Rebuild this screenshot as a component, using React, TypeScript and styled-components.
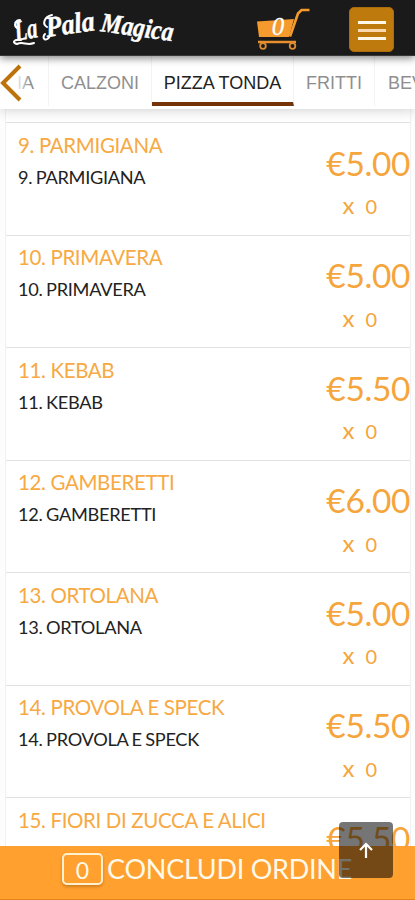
import React from "react";
import styled, { createGlobalStyle } from "styled-components";

const GlobalStyle = createGlobalStyle`
  * { box-sizing: border-box; }
  body { margin: 0; overflow: hidden; background: #fdfdfd; font-family: Lato, sans-serif; }
`;

const Screen = styled.div`
  position: relative;
  display: flex;
  flex-direction: column;
  width: 415px;
  height: 900px;
  overflow: hidden;
`;

const Header = styled.header`
  display: flex;
  flex: none;
  align-items: flex-start;
  height: 56px;
  background: #1a1a1a;
  border-bottom: 1px solid #393637;
  z-index: 3;
  box-shadow: 0 2px 8px rgba(0, 0, 0, 0.5);
`;

const Logo = styled.svg`
  width: 180px;
  height: 55px;
  flex: none;
  font-family: "Liberation Serif", serif;
  font-weight: 700;
  font-style: italic;
  fill: #fff;
`;

const CartIcon = styled.svg`
  width: 56px;
  height: 48px;
  margin: 4px 0 0 74px;
  flex: none;
`;

const MenuButton = styled.button`
  display: flex;
  flex-direction: column;
  align-items: center;
  gap: 5px;
  width: 45px;
  height: 45px;
  margin: 7px 0 0 39px;
  padding: 13px 0 0;
  border: 1px solid #ab6c0c;
  border-radius: 5px;
  background: #be7a0c;
`;

const MenuBar = styled.span<{ $soft?: boolean }>`
  width: 28px;
  height: 3px;
  background: ${(p) => (p.$soft ? "#fbd9b0" : "#fff8e8")};
`;

const Tabs = styled.nav`
  position: relative;
  display: flex;
  flex: none;
  height: 53px;
  background: #fff;
  z-index: 2;
  box-shadow: 0 1px 12px rgba(0, 0, 0, 0.2);
`;

const Tab = styled.div<{ $width: number; $active?: boolean; $end?: boolean }>`
  flex: none;
  width: ${(p) => p.$width}px;
  height: 50px;
  padding-right: ${(p) => (p.$end ? 14 : 0)}px;
  border-right: 1px solid #f3f3f3;
  border-bottom: ${(p) => (p.$active ? "4px solid #753407" : "0 solid")};
  color: ${(p) => (p.$active ? "#222" : "#8f8f8f")};
  font: 18px/55px "Liberation Sans", sans-serif;
  text-align: ${(p) => (p.$end ? "right" : "center")};
  white-space: nowrap;
`;

const ClippedTab = styled(Tab)`
  text-align: left;
  padding-left: 13px;
`;

const BackFade = styled.div`
  position: absolute;
  left: 0;
  top: 7px;
  width: 30px;
  height: 40px;
  background: linear-gradient(90deg, #fff 50%, rgba(255, 255, 255, 0));
`;

const List = styled.main`
  flex: none;
  margin: 0 4px 0 5px;
  border: solid #f1f1f1;
  border-width: 0 1px;
  background: #fff;
`;

const ListTop = styled.div`
  height: 13px;
`;

const Item = styled.article`
  display: flex;
  justify-content: space-between;
  height: 112.5px;
  padding-left: 12px;
  border-top: 1px solid #e2e2e2;
`;

const Names = styled.div`
  padding-top: 7.5px;
  white-space: nowrap;
`;

const Title = styled.h2`
  margin: 0;
  color: #f7a943;
  font-size: 20.5px;
  line-height: 28px;
  font-weight: 400;
  letter-spacing: -0.36px;
`;

const Description = styled.p`
  margin: 4px 0 0;
  color: #222;
  font-size: 18.2px;
  line-height: 28px;
  letter-spacing: -0.3px;
  word-spacing: -0.8px;
`;

const Side = styled.div`
  display: flex;
  flex-direction: column;
  align-items: flex-end;
  color: #f5a53c;
`;

const Price = styled.div`
  margin-top: 17.5px;
  font-size: 33.5px;
  line-height: 44px;
  letter-spacing: -0.4px;
`;

const Quantity = styled.div`
  display: flex;
  gap: 11px;
  margin: 7.500px 33px 0 0;
  font-size: 20px;
  line-height: 28px;
`;

const Times = styled.span`
  font-size: 24px;
  line-height: 25px;
`;

const OrderBar = styled.footer`
  position: absolute;
  inset: auto 0 0;
  display: flex;
  align-items: flex-start;
  height: 54px;
  padding: 7px 0 0 62px;
  background: #ffa02f;
  border-bottom: 1px solid #e2841a;
  color: #fff9ea;
  z-index: 4;
`;

const Count = styled.span`
  width: 41px;
  height: 32px;
  margin-right: 4px;
  border: 2px solid #fff0cf;
  border-radius: 5px;
  box-shadow: 0 2px 3px rgba(125, 65, 0, 0.35);
  font-size: 23px;
  line-height: 30px;
  text-align: center;
`;

const OrderLabel = styled.span`
  font-size: 27px;
  line-height: 31px;
  letter-spacing: -0.25px;
  white-space: nowrap;
`;

const TopButton = styled.button`
  position: absolute;
  right: 22px;
  bottom: 22px;
  width: 54px;
  height: 56px;
  padding: 0;
  border: 0;
  border-radius: 4px;
  background: rgba(0, 0, 0, 0.54);
  z-index: 5;
`;

const items = [
  ["9. PARMIGIANA", "5.00"],
  ["10. PRIMAVERA", "5.00"],
  ["11. KEBAB", "5.50"],
  ["12. GAMBERETTI", "6.00"],
  ["13. ORTOLANA", "5.00"],
  ["14. PROVOLA E SPECK", "5.50"],
  ["15. FIORI DI ZUCCA E ALICI", "5.50"],
];

export default function App() {
  return (
    <Screen>
      <GlobalStyle />
      <Header>
        <Logo viewBox="0 0 180 55">
          <g stroke="#fff" strokeWidth="0.5" fontSize="29">
            <text transform="translate(16 41) rotate(-10)" textLength="23" lengthAdjust="spacingAndGlyphs">La</text>
            <text transform="translate(47 37) rotate(-8)" textLength="49" lengthAdjust="spacingAndGlyphs">Pala</text>
            <text transform="translate(100 31) rotate(8)" fontSize="27" textLength="73" lengthAdjust="spacingAndGlyphs">Magica</text>
          </g>
          <g fill="none" stroke="#fff" strokeWidth="2" strokeLinecap="round">
            <path d="M21 40 C13 39 12 43 17 44 C23 41 27 46 34 43" />
            <path d="M17 28 C13 25 16 20 20 20" />
            <path d="M50 36 C46 43 41 38 45 34 M47 27 C42 24 44 17 52 15" />
          </g>
        </Logo>
        <CartIcon viewBox="254 4 56 48">
          <path d="M257 21.500 L294 19 L289 37 H259 Z" fill="#f59a2c" />
          <path d="M309.500 10 H301.500 L298 13.500 L290 36.500" fill="none" stroke="#f59a2c" strokeWidth="2.6" />
          <path d="M258 42 H296" stroke="#e8902c" strokeWidth="2.6" />
          <circle cx="263" cy="46" r="2.8" fill="none" stroke="#dc8c34" strokeWidth="1.8" />
          <circle cx="292.500" cy="46" r="2.8" fill="none" stroke="#dc8c34" strokeWidth="1.8" />
          <text x="278" y="35" textAnchor="middle" fontFamily="Liberation Serif, serif" fontStyle="italic" fontSize="25" fill="#fff" stroke="#fff" strokeWidth="0.3">0</text>
        </CartIcon>
        <MenuButton aria-label="Menu">
          <MenuBar />
          <MenuBar $soft />
          <MenuBar />
        </MenuButton>
      </Header>
      <Tabs>
        <Tab $width={49} $end>CIA</Tab>
        <Tab $width={103}>CALZONI</Tab>
        <Tab $width={142} $active>PIZZA TONDA</Tab>
        <Tab $width={81}>FRITTI</Tab>
        <ClippedTab $width={120}>BEVANDE</ClippedTab>
        <BackFade>
          <svg width="26" height="40" viewBox="0 0 26 40">
            <path d="M20 3 L3 20 L20 37" fill="none" stroke="#bd720b" strokeWidth="4" />
          </svg>
        </BackFade>
      </Tabs>
      <List>
        <ListTop />
        {items.map(([name, price]) => (
          <Item key={name}>
            <Names>
              <Title>{name}</Title>
              <Description>{name}</Description>
            </Names>
            <Side>
              <Price>€{price}</Price>
              <Quantity>
                <Times>x</Times>
                <span>0</span>
              </Quantity>
            </Side>
          </Item>
        ))}
      </List>
      <OrderBar>
        <Count>0</Count>
        <OrderLabel>CONCLUDI ORDINE</OrderLabel>
      </OrderBar>
      <TopButton aria-label="Torna su">
        <svg width="54" height="56" viewBox="0 0 54 56">
          <path d="M27 36 V22 M21 28 L27 22 L33 28" fill="none" stroke="#fff" strokeWidth="2.2" />
        </svg>
      </TopButton>
    </Screen>
  );
}
